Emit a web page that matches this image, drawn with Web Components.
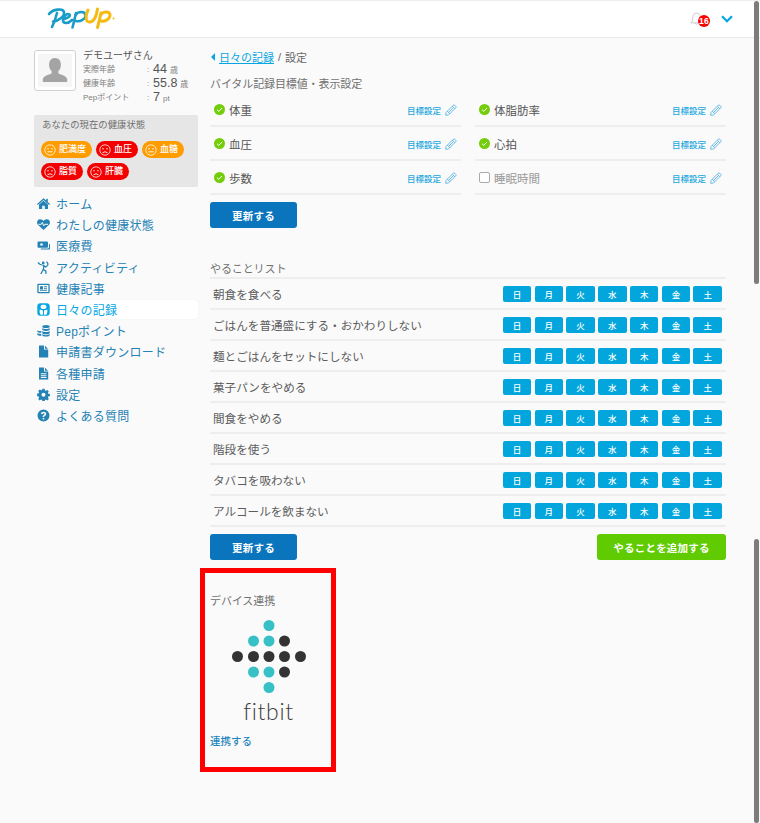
<!DOCTYPE html>
<html lang="ja"><head><meta charset="utf-8"><title>Pep Up</title>
<style>
html,body{margin:0;padding:0;height:823px;overflow:hidden;background:#fafafa}
body{font-family:"Liberation Sans","Noto Sans CJK JP",sans-serif;color:#555}
</style></head><body>
<pep-app></pep-app>
<script>
const FACE={
 ok:'<circle cx="6" cy="6" r="5.2" fill="none" stroke="#fff" stroke-width=".9" opacity=".85"/><circle cx="4" cy="4.8" r=".7" fill="#fff"/><circle cx="8" cy="4.8" r=".7" fill="#fff"/><path d="M3.4 7.8h5.2" stroke="#fff" stroke-width=".9"/>',
 bad:'<circle cx="6" cy="6" r="5.2" fill="none" stroke="#fff" stroke-width=".9" opacity=".85"/><circle cx="4" cy="4.8" r=".7" fill="#fff"/><circle cx="8" cy="4.8" r=".7" fill="#fff"/><path d="M3.5 8.8q2.5-2.2 5 0" fill="none" stroke="#fff" stroke-width=".9"/>'
};
const ICONS={
 home:'<path d="M6.5 1.2 0 7l.8.9L6.5 3l5.700 4.900.8-.9-2.200-2V1.700H9.300v1.900z"/><path d="M2 7.600 6.500 3.800 11 7.600V12H7.800V8.700H5.200V12H2z"/>',
 heart:'<path d="M6.500 12 .9 6.700C-.8 4.700.3 1.400 3 1.300c1.500-.1 2.700.7 3.500 1.800C7.300 2 8.500 1.200 10 1.300c2.700.1 3.800 3.400 2.100 5.400z"/><path d="M1.500 6.300h2.800l1-1.900 1.500 3.500 1.100-1.600h3.100" fill="none" stroke="#fafafa" stroke-width="1"/>',
 money:'<path d="M1.500 2.500h8.500a1 1 0 0 1 1 1v4.200a1 1 0 0 1-1 1H1.500a1 1 0 0 1-1-1V3.500a1 1 0 0 1 1-1z"/><path d="M12 5h.4a.8.8 0 0 1 .6.7v4.100a.8.8 0 0 1-.8.8H4.500a.8.8 0 0 1-.8-.8V9.500h7.300a1 1 0 0 0 1-1z"/><circle cx="4.500" cy="5.500" r="1.300" fill="#fafafa"/>',
 run:'<circle cx="6.200" cy="2" r="1.400"/><path d="M5 4 2.800 3.300 1 1.500M5.500 4.200c1.300.2 1.400 1.600 1 3l-.5 1.800L3.800 13M6.500 8.600l2.300 1.300.2 3M6.800 4.500 8.600 6l1.500-.9M9.500.8c1.500 1.200 1.500 3 .8 4" fill="none" stroke="currentColor" stroke-width="1.300"/>',
 news:'<path fill-rule="evenodd" d="M1.500 1.800h10a1.200 1.200 0 0 1 1.200 1.200v7a1.200 1.200 0 0 1-1.200 1.200h-10A1.200 1.200 0 0 1 .3 10V3a1.200 1.200 0 0 1 1.200-1.200zm.1 1.300V9.900h9.800V3.100z"/><path d="M3 4.300h3v3.200H3zM7 4.300h3v1H7zM7 6.300h3v1H7zM3 8.200h7V9H3z"/>',
 diary:'<rect x=".3" y=".3" width="12.400" height="12.400" rx="3"/><path d="M3.700 3.200c0-1 1.200-1.500 2.800-1.500s2.800.5 2.800 1.500v1.200c0 .9-1 1.500-2.800 1.500s-2.800-.6-2.800-1.500z" fill="#fff"/><path d="M2.800 6.500c1 .4 2 .8 3.200.9v4.300H3.800c-1.200-1-1.400-3.300-1-5.200zM10.200 6.500c-1 .4-2 .8-3.200.9v4.300h2.200c1.200-1 1.400-3.300 1-5.200z" fill="#fff"/>',
 coins:'<ellipse cx="9" cy="2.600" rx="3.700" ry="1.500"/><path d="M5.300 3.900c.7.700 2.100 1.100 3.700 1.100s3-.4 3.700-1.100v1.700c0 .8-1.700 1.400-3.700 1.400s-3.700-.6-3.700-1.400zM5.300 7c.7.700 2.100 1.100 3.700 1.100s3-.4 3.700-1.100v1.900c0 .8-1.700 1.400-3.700 1.400s-3.700-.6-3.700-1.400zM5.300 10.100c.7.700 2.100 1.100 3.700 1.100s3-.4 3.700-1.100v1.100c0 .8-1.700 1.400-3.700 1.400s-3.700-.6-3.700-1.400zM.3 6.200c.7.600 2 .9 4 .9v1.700c-2 0-4-.5-4-1.300zM.3 9c.7.600 2 .9 4 .9v1.800c-2 0-4-.5-4-1.300z"/>',
 file:'<path d="M2 .5h5V4.500h4.200V12.500H2zM8 .7l3 3H8z"/>',
 filetext:'<path fill-rule="evenodd" d="M2 .5h5V4.500h4.200V12.500H2zM3.800 6.300v1h5.600v-1zM3.800 8.200v1h5.600v-1zM3.800 10.100v1h5.600v-1z"/><path d="M8 .7l3 3H8z"/>',
 cog:'<path fill-rule="evenodd" d="M5.400.8h2.200l.3 1.600 1 .4 1.400-.9 1.500 1.500-.9 1.400.4 1 1.600.3v2.200l-1.600.3-.4 1 .9 1.400-1.500 1.500-1.400-.9-1 .4-.3 1.600H5.400l-.3-1.600-1-.4-1.400.9-1.500-1.500.9-1.400-.4-1-1.600-.3V5.600l1.600-.3.4-1-.9-1.400 1.500-1.500 1.400.9 1-.4zM6.500 4.700a2 2 0 1 0 0 4 2 2 0 0 0 0-4z"/>',
 help:'<path fill-rule="evenodd" d="M6.500.5a6 6 0 1 1 0 12 6 6 0 0 1 0-12zM6.600 2.800c-1.500 0-2.500.7-2.800 2l1.400.4c.2-.7.6-1 1.300-1 .7 0 1.100.3 1.100.8 0 .4-.3.7-.9 1.100-.7.5-1.100 1-1.100 2h1.500c0-.5.200-.8.800-1.200.8-.5 1.300-1.100 1.300-2 0-1.300-1.100-2.100-2.600-2.100zM5.700 9h1.600v1.500H5.700z"/>'
};
function el(name,render){
 customElements.define(name,class extends HTMLElement{
  connectedCallback(){ if(this.shadowRoot) return; const r=this.attachShadow({mode:'open'}); r.innerHTML=render(this); }
 });
}
el('pep-logo',()=>`<style>:host{display:block;width:72px;height:26px}svg{display:block}</style>
<svg width="72" height="26" viewBox="0 0 72 26" role="img" aria-label="Pep Up" fill="none" stroke-linecap="round" stroke-linejoin="round">
<g stroke="#1a9cc8" stroke-width="2.600"><path d="M2 8C6 3 16 2 17 6C18 10 12 15 6 15.500"/><path d="M10 7C9 11 7 17 5 21"/>
<path d="M16 13C20 13 24 10 22.500 8.500C20.500 7 16 10 16 14C16 18 21 18 25 14"/>
<path d="M29 7C28 11 27 16 25.500 21.500"/><path d="M28.500 9C31 5 38 5 38.500 9C39 13 33 16 29 15"/></g>
<g stroke="#f6bb12" stroke-width="3"><path d="M41 4C39 8 38.500 13 40 15C42 17 46 16 48 12C49.500 9 50 6 50.500 3"/>
<path d="M54 7C53 11 52 16 50.500 21.500"/><path d="M53.500 9C56 5 63 5 63 9C63 13 58 16 54 15"/></g>
<circle cx="66.500" cy="12.500" r="1" fill="#f6bb12"/></svg>`);
el('pep-notify',()=>`<style>:host{display:flex;align-items:center;width:43px;position:relative}
.b{position:absolute;left:8px;top:2.500px;width:12px;height:12px;border-radius:50%;background:#f00;color:#fff;font:bold 8.500px/12px "Liberation Sans",sans-serif;text-align:center;letter-spacing:.2px}
.bell{display:block}.chev{display:block;margin-left:auto}</style>
<svg class="bell" width="13" height="14" viewBox="0 0 13 14" fill="none" stroke="#c4c4c4" stroke-width=".9"><path d="M6.500 1c2.400 0 3.600 1.700 3.600 3.900 0 3.200.8 4.800 2.200 6H.7c1.400-1.200 2.200-2.800 2.200-6C2.900 2.700 4.100 1 6.500 1z"/><path d="M5.200 11.300a1.400 1.400 0 0 0 2.600 0"/></svg>
<span class="b">16</span>
<svg class="chev" width="12" height="8" viewBox="0 0 12 8" fill="none" stroke="#08a5e0" stroke-width="2.300"><path d="M1 1.200l5 5 5-5"/></svg>`);
el('pep-header',()=>`<style>:host{display:flex;align-items:center;justify-content:space-between;height:36px;border-top:1px solid #eee;border-bottom:1px solid #e9e9e9;background:#fff;padding:0 27px 0 47px;box-sizing:content-box}</style><pep-logo></pep-logo><pep-notify></pep-notify>`);
el('pep-avatar',()=>`<style>:host{display:block;box-sizing:border-box;width:42px;height:41px;border:1px solid #d0d0d0;border-radius:3px;background:#fff;padding:3px}
div{background:#f6f6f6;height:100%}svg{display:block}</style><div><svg width="34" height="33" viewBox="0 0 34 33" fill="#a4a4a4"><path d="M17 4c3.900 0 5.900 2.800 5.900 6.700 0 2.600-.9 4.900-2.500 6.400v2.500c3 1.200 8 2.100 8.800 5.700v2.700H4.800v-2.700c.8-3.600 5.800-4.500 8.800-5.700v-2.500c-1.600-1.500-2.500-3.800-2.500-6.400C11.100 6.800 13.100 4 17 4z"/></svg></div>`);
el('profile-row',h=>`<style>:host{display:grid;grid-template-columns:64px 6px auto;height:14px;align-items:center;font-size:8px;line-height:14px;color:#808080}
b{font-weight:400;font-size:12.500px;color:#555;margin-right:3px}</style><span>${h.getAttribute('k')}</span><span>:</span><span><b>${h.getAttribute('v')}</b>${h.getAttribute('u')}</span>`);
el('pep-profile',()=>`<style>:host{display:flex;gap:7px;height:55px}
.n{font-size:10px;line-height:12px;color:#555}</style><pep-avatar></pep-avatar><div><div class="n">デモユーザさん</div>
<profile-row k="実際年齢" v="44" u="歳"></profile-row><profile-row k="健康年齢" v="55.8" u="歳"></profile-row><profile-row k="Pepポイント" v="7" u="pt"></profile-row></div>`);
el('health-chip',h=>{const bad=h.getAttribute('s')==='bad';return `<style>:host{display:inline-flex;align-items:center;gap:3px;height:17px;box-sizing:border-box;padding:0 6px 0 3px;border-radius:9px;background:${bad?'#f40000':'#ff9c00'};color:#fff;font-size:9px;line-height:17px;font-weight:500}svg{display:block}</style><svg width="12" height="12" viewBox="0 0 12 12">${FACE[h.getAttribute('s')]}</svg><slot></slot>`});
el('health-box',()=>`<style>:host{display:block;box-sizing:border-box;height:72px;margin-top:10px;background:#e6e6e6;border-radius:2px;padding:3px 7px}
.t{font-size:9.400px;line-height:13px;color:#707070;margin:0 0 10px 1px}.r{display:flex;gap:4px;margin-bottom:5px}</style>
<div class="t">あなたの現在の健康状態</div>
<div class="r"><health-chip s="ok">肥満度</health-chip><health-chip s="bad">血圧</health-chip><health-chip s="ok">血糖</health-chip></div>
<div class="r"><health-chip s="bad">脂質</health-chip><health-chip s="bad">肝臓</health-chip></div>`);
el('nav-item',h=>{const a=h.hasAttribute('active');return `<style>:host{display:flex;align-items:center;height:21.200px;box-sizing:border-box;padding-left:3px;gap:6px;font-size:12px;letter-spacing:.25px;color:${a?'#05a6e2':'#2582b4'};position:relative}
.bg{${a?'position:absolute;left:0;right:0;top:1px;bottom:1px;background:#fff;border-radius:3px;box-shadow:0 0 1px #ddd;':'display:none;'}}
svg{display:block;position:relative;flex:none}span{position:relative}</style><div class="bg"></div><svg width="13" height="13" viewBox="0 0 13 13" fill="currentColor">${ICONS[h.getAttribute('i')]}</svg><span><slot></slot></span>`});
el('pep-sidebar',()=>`<style>:host{display:block;width:164px;flex:none;padding-top:12px}nav{display:block;margin-top:6px}</style>
<pep-profile></pep-profile><health-box></health-box><nav>
<nav-item i="home">ホーム</nav-item><nav-item i="heart">わたしの健康状態</nav-item><nav-item i="money">医療費</nav-item><nav-item i="run">アクティビティ</nav-item><nav-item i="news">健康記事</nav-item><nav-item i="diary" active>日々の記録</nav-item><nav-item i="coins">Pepポイント</nav-item><nav-item i="file">申請書ダウンロード</nav-item><nav-item i="filetext">各種申請</nav-item><nav-item i="cog">設定</nav-item><nav-item i="help">よくある質問</nav-item></nav>`);
el('pep-crumb',()=>`<style>:host{display:flex;align-items:center;height:16px;font-size:11px;color:#666;padding-left:1px}a{color:#05a6e2;text-decoration:underline;margin-left:4px}i{display:block;width:0;height:0;border:4.500px solid transparent;border-right:4px solid #05a6e2;border-left:0}span{margin-left:4px}b{font-weight:400;margin-left:4px}</style><i></i><a>日々の記録</a><span>/</span><b>設定</b>`);
el('section-title',()=>`<style>:host{display:block;font-size:11px;line-height:16px;color:#707070;letter-spacing:-.1px}</style><slot></slot>`);
el('vital-row',h=>{const off=h.hasAttribute('off');return `<style>:host{display:flex;align-items:center;height:34px;box-sizing:border-box;border-bottom:2px solid #eee;padding:1px 4px 0;font-size:11.500px;color:${off?'#999':'#555'}}
.c{display:block;margin-right:4px;flex:none}.l{flex:1}.t{font-size:8.500px;color:#1ea8de;font-weight:500;margin-right:4px}.box{box-sizing:border-box;width:11px;height:11px;border:1px solid #aaa;border-radius:2px;margin-right:4px;background:#fff}svg{display:block}</style>
${off?'<div class="box"></div>':'<svg class="c" width="11" height="11" viewBox="0 0 11 11"><circle cx="5.500" cy="5.500" r="5.500" fill="#74cd0a"/><path d="M3 5.700l1.800 1.700L8 4" fill="none" stroke="#fff" stroke-width="1"/></svg>'}
<span class="l"><slot></slot></span><span class="t">目標設定</span>
<svg width="12" height="12" viewBox="0 0 12 12" fill="none" stroke="#46ade2" stroke-width=".8"><path d="M1 8.500 8.300 1.200a1 1 0 0 1 1.400 0l1.100 1.100a1 1 0 0 1 0 1.400L3.500 11 .7 11.300z"/><path d="M7.300 2.200l2.500 2.500M2.300 7.200l2.500 2.500M3.500 8.500l4.900-4.900"/></svg>`});
el('pep-button',h=>`<style>:host{display:flex;align-items:center;justify-content:center;height:26px;box-sizing:border-box;width:${h.getAttribute('w')||87}px;border-radius:3px;background:${h.getAttribute('c')||'#0a74bd'};color:#fff;font-size:10.500px;font-weight:700;letter-spacing:.2px}</style><slot></slot>`);
el('day-button',()=>`<style>:host{display:flex;align-items:center;justify-content:center;width:28.600px;height:16px;border-radius:2px;background:#02a6dc;color:#fff;font-size:8.500px;font-weight:500}</style><slot></slot>`);
el('todo-row',h=>`<style>:host{display:flex;align-items:center;justify-content:space-between;height:31px;box-sizing:border-box;border-bottom:2px solid #eee;padding:1.500px 4px 0 3px;font-size:11.600px;color:#5c5c5c}
span{margin-top:-1px}.w{display:flex;gap:3.200px}</style><span><slot></slot></span><div class="w">${[...'日月火水木金土'].map(d=>`<day-button>${d}</day-button>`).join('')}</div>`);
el('device-card',()=>`<style>:host{display:block;box-sizing:border-box;width:136px;height:204px;margin:8px 0 0 -10px;border:5px solid #f00;padding:20px 5px 0;background:#fafafa}
svg{display:block;margin:11px 0 0 21.500px}.f{font-family:Lato,"Liberation Sans",sans-serif;font-weight:300;font-size:23px;line-height:24px;color:#3c3c3c;text-align:center;letter-spacing:.7px;margin:6px 0 0 1px}
.l{font-size:10.500px;line-height:14px;color:#1f86bd;font-weight:500;margin-top:11px}</style>
<section-title>デバイス連携</section-title>
<svg width="74" height="73" viewBox="0 0 74 73">
<g fill="#37c0c6"><circle cx="37" cy="5.500" r="5.500"/><circle cx="21.500" cy="21" r="5.500"/><circle cx="37" cy="21" r="5.500"/><circle cx="21.500" cy="52" r="5.500"/><circle cx="37" cy="52" r="5.500"/><circle cx="37" cy="67.500" r="5.500"/></g>
<g fill="#333"><circle cx="52.500" cy="21" r="5.500"/><circle cx="5.500" cy="36.500" r="5.500"/><circle cx="21.500" cy="36.500" r="5.500"/><circle cx="37" cy="36.500" r="5.500"/><circle cx="52.500" cy="36.500" r="5.500"/><circle cx="68.500" cy="36.500" r="5.500"/><circle cx="52.500" cy="52" r="5.500"/></g></svg>
<div class="f">fitbit</div><div class="l">連携する</div>`);
el('pep-main',()=>`<style>:host{display:block;width:516px;flex:none;padding-top:11px}
.tt{margin-top:11px}.grid{display:grid;grid-template-columns:251px 251px;column-gap:14px;margin-top:1px}
pep-button.a{margin-top:7px}.t2{margin-top:33px}.list{border-top:2px solid #eee}
.acts{display:flex;justify-content:space-between;margin-top:7px}</style>
<pep-crumb></pep-crumb><section-title class="tt">バイタル記録目標値・表示設定</section-title>
<div class="grid"><vital-row>体重</vital-row><vital-row>体脂肪率</vital-row><vital-row>血圧</vital-row><vital-row>心拍</vital-row><vital-row>歩数</vital-row><vital-row off>睡眠時間</vital-row></div>
<pep-button class="a">更新する</pep-button>
<section-title class="t2">やることリスト</section-title>
<div class="list"><todo-row>朝食を食べる</todo-row><todo-row>ごはんを普通盛にする・おかわりしない</todo-row><todo-row>麺とごはんをセットにしない</todo-row><todo-row>菓子パンをやめる</todo-row><todo-row>間食をやめる</todo-row><todo-row>階段を使う</todo-row><todo-row>タバコを吸わない</todo-row><todo-row>アルコールを飲まない</todo-row></div>
<div class="acts"><pep-button>更新する</pep-button><pep-button w="129" c="#5fcb00">やることを追加する</pep-button></div>
<device-card></device-card>`);
el('scroll-thumb',h=>`<style>:host{position:absolute;right:1px;width:5px;top:${h.getAttribute('t')}px;height:${h.getAttribute('h')}px;background:#7c7c7c;border-radius:2.500px}</style>`);
el('pep-app',()=>`<style>:host{display:block;position:relative;width:760px;height:823px;overflow:hidden}
.body{display:flex;gap:12px;padding-left:34px}</style>
<pep-header></pep-header><div class="body"><pep-sidebar></pep-sidebar><pep-main></pep-main></div>
<scroll-thumb t="1" h="283"></scroll-thumb><scroll-thumb t="539" h="284"></scroll-thumb>`);
</script>
</body></html>
